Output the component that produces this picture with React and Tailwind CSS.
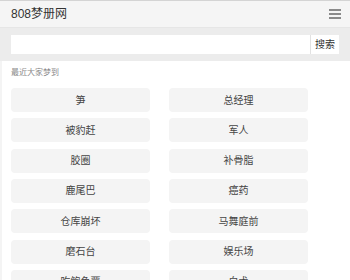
const DREAMS = ['笋', '总经理', '被豹赶', '军人', '胶圈', '补骨脂', '鹿尾巴', '癌药', '仓库崩坏', '马舞庭前', '磨石台', '娱乐场', '吃鲍鱼覃', '白术']

export default function App() {
  return (
    <div className="w-[350px] h-[280px] overflow-hidden bg-white text-[#333]" style={{ fontFamily: '"Liberation Sans", "Noto Sans CJK SC", sans-serif' }}>
      {/* Header */}
      <div className="h-[28px] border-t border-[#d4d4d4] bg-[#f5f5f5] border-b border-b-[#e6e6e6] flex items-center justify-between pl-[11px] pr-[9px]">
        <span className="text-[12px] leading-none">808梦册网</span>
        <div className="flex flex-col gap-[2px] w-[12px]">
          <span className="h-[2px] bg-[#8a8a8a]" />
          <span className="h-[2px] bg-[#8a8a8a]" />
          <span className="h-[2px] bg-[#8a8a8a]" />
        </div>
      </div>

      {/* Search */}
      <div className="h-[33px] bg-[#ececec] flex items-center px-[11px]">
        <div className="flex w-full h-[19px] bg-white">
          <input className="flex-1 min-w-0 outline-none px-1 text-[10px]" />
          <button className="w-[29px] border-l border-[#e2e2e2] text-[10px] leading-none">搜索</button>
        </div>
      </div>

      {/* Recent dreams */}
      <div className="pl-[9px] pt-[8px] border-l-2 border-[#f4f4f4] h-full">
        <p className="text-[8px] text-[#888] leading-none">最近大家梦到</p>
        <div className="grid grid-cols-[139px_139px] gap-x-[19px] gap-y-[6.33px] mt-[11px]">
          {DREAMS.map(d => (
            <div key={d} className="h-[24px] rounded-[4px] bg-[#f4f4f4] flex items-center justify-center text-[10px] text-[#444]">
              {d}
            </div>
          ))}
        </div>
      </div>
    </div>
  )
}
